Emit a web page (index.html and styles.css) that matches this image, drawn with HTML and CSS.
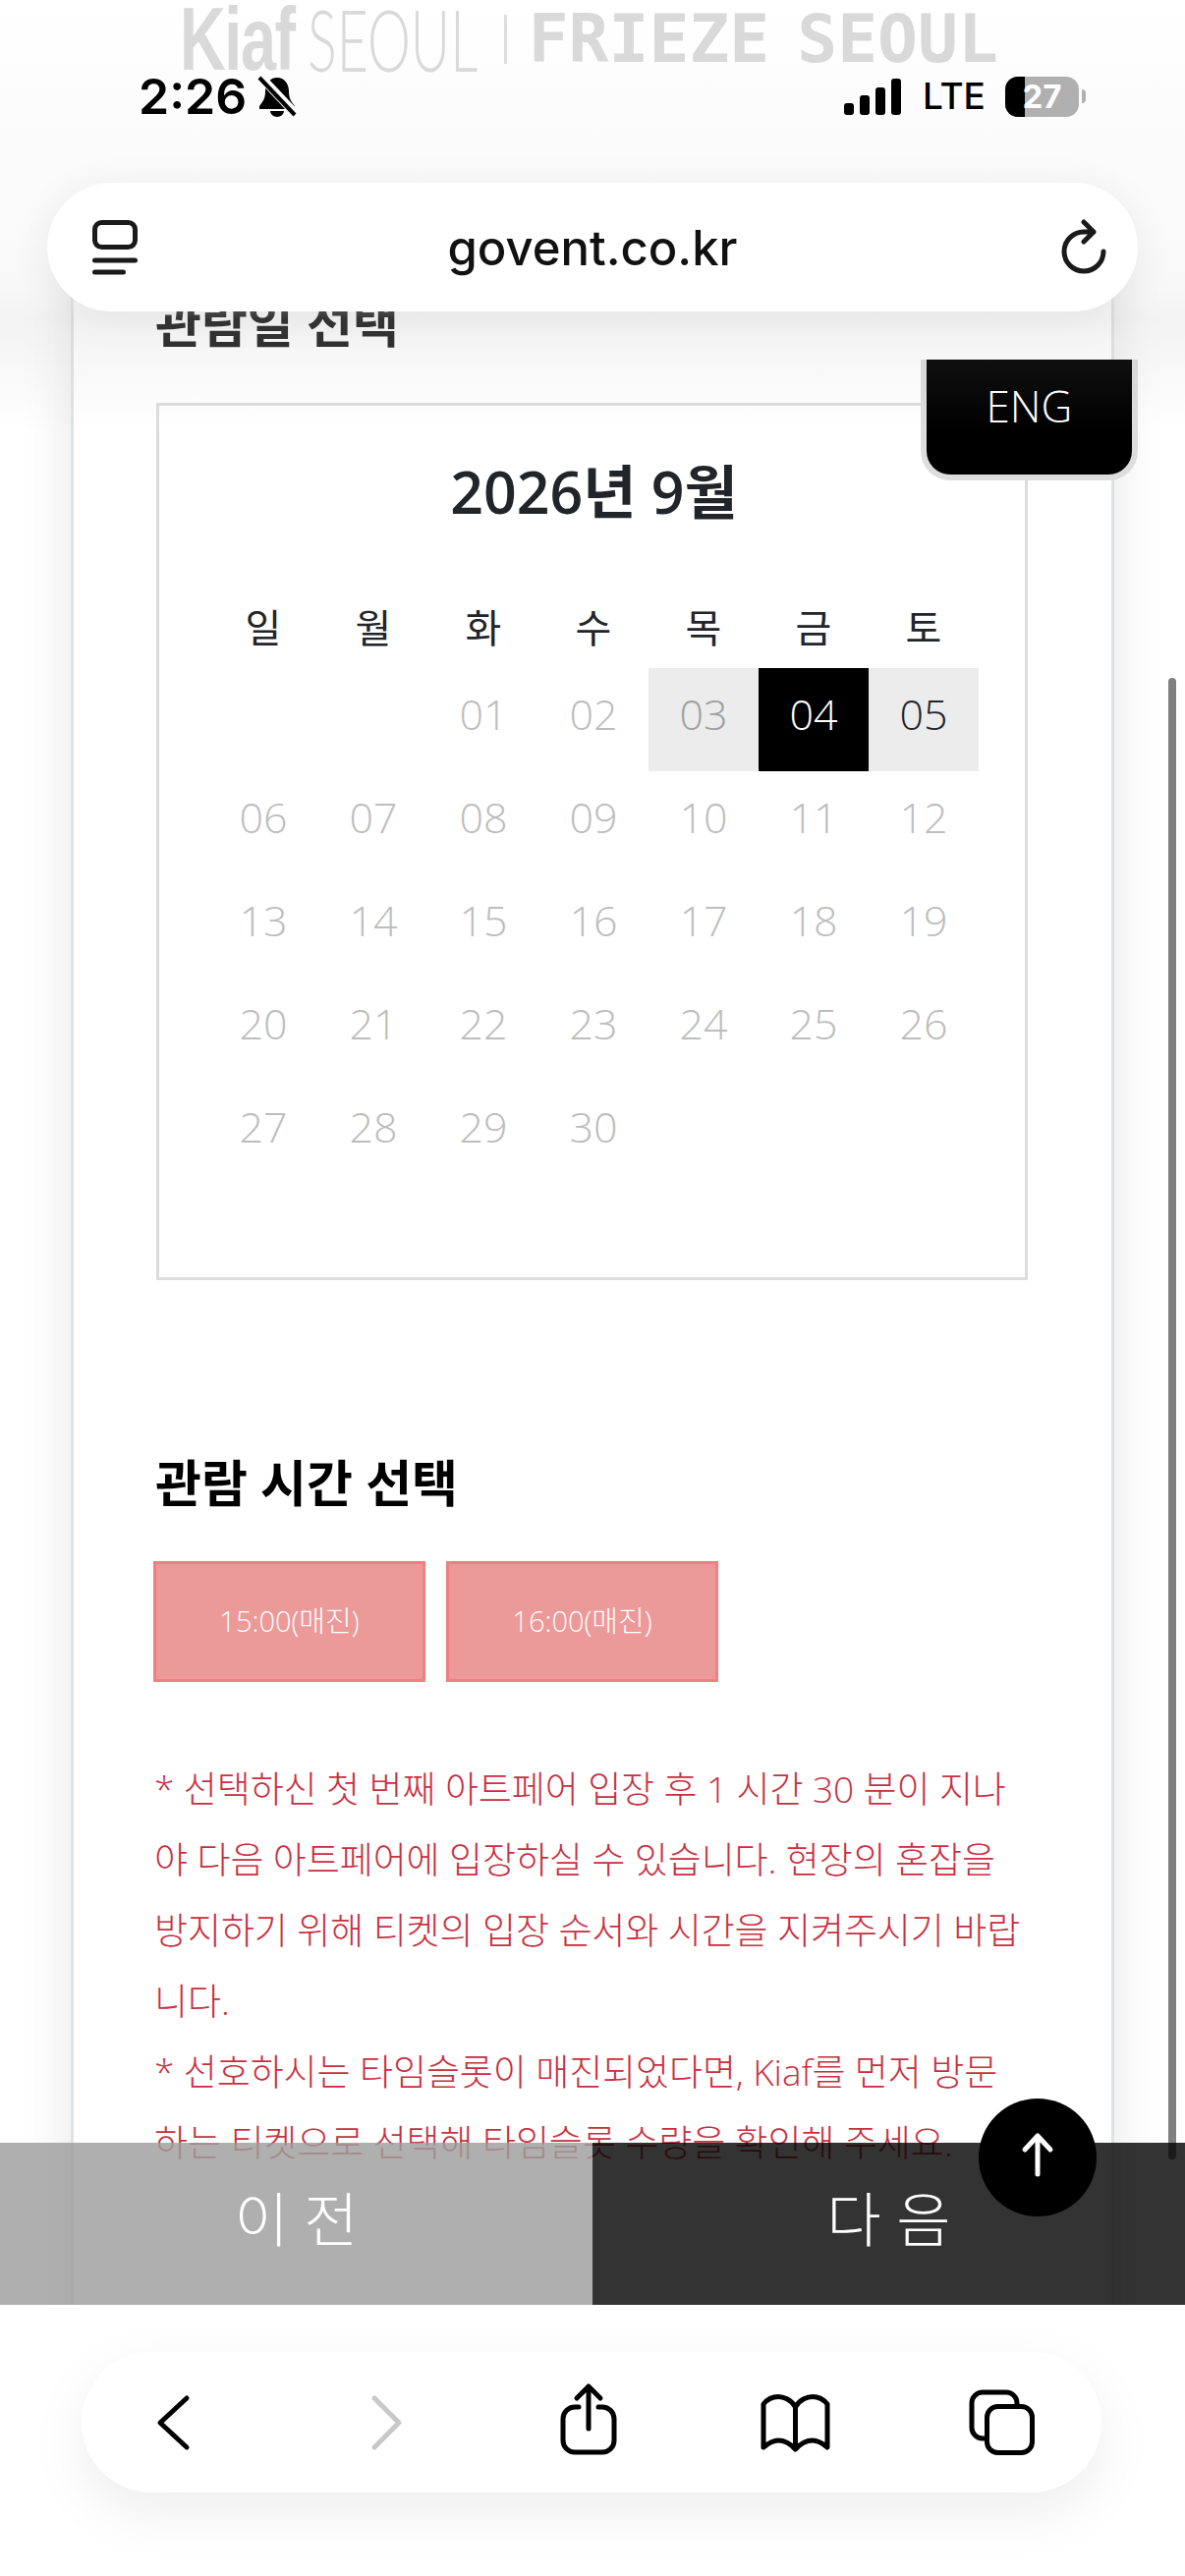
FILE: index.html
```html
<!DOCTYPE html>
<html lang="ko">
<head>
<meta charset="utf-8">
<title>govent.co.kr</title>
<link rel="stylesheet" href="styles.css">
</head>
<body>
<div class="screen">
  <main class="card">
    <h2 class="heading heading-first">관람일 선택</h2>
    <section class="calendar">
      <h3 class="cal-title">2026년 9월</h3>
      <div class="cal-grid">
        <div class="wd">일</div><div class="wd">월</div><div class="wd">화</div><div class="wd">수</div><div class="wd">목</div><div class="wd">금</div><div class="wd">토</div>
        <div class="day"></div><div class="day"></div><div class="day">01</div><div class="day">02</div><div class="day avail">03</div><div class="day sel">04</div><div class="day avail dark">05</div>
        <div class="day">06</div><div class="day">07</div><div class="day">08</div><div class="day">09</div><div class="day">10</div><div class="day">11</div><div class="day">12</div>
        <div class="day">13</div><div class="day">14</div><div class="day">15</div><div class="day">16</div><div class="day">17</div><div class="day">18</div><div class="day">19</div>
        <div class="day">20</div><div class="day">21</div><div class="day">22</div><div class="day">23</div><div class="day">24</div><div class="day">25</div><div class="day">26</div>
        <div class="day">27</div><div class="day">28</div><div class="day">29</div><div class="day">30</div>
      </div>
    </section>
    <h2 class="heading heading-second">관람 시간 선택</h2>
    <div class="slots">
      <div class="slot">15:00(매진)</div>
      <div class="slot">16:00(매진)</div>
    </div>
    <p class="notice">* 선택하신 첫 번째 아트페어 입장 후 1 시간 30 분이 지나<br>야 다음 아트페어에 입장하실 수 있습니다. 현장의 혼잡을<br>방지하기 위해 티켓의 입장 순서와 시간을 지켜주시기 바랍<br>니다.<br>* 선호하시는 타임슬롯이 매진되었다면, Kiaf를 먼저 방문<br>하는 티켓으로 선택해 타임슬롯 수량을 확인해 주세요.</p>
  </main>

  <div class="eng">ENG</div>

  <div class="scrollbar"></div>

  <div class="actions">
    <div class="action action-prev">이 전</div>
    <div class="action action-next">다 음</div>
  </div>

  <div class="to-top">
    <svg class="icon" width="60" height="60" viewBox="0 0 60 60"><path class="st-white" d="M30 47V9M17 22 30 8l13 14"/></svg>
  </div>

  <header class="chrome">
    <div class="logo">
      <span class="logo-kiaf">Kiaf</span>
      <span class="logo-seoul">SEOUL</span>
      <span class="logo-bar"></span>
      <span class="logo-frieze">FRIEZE SEOUL</span>
    </div>
    <div class="status">
      <span class="time">2:26</span>
      <svg class="icon bell" width="40" height="42" viewBox="0 0 40 42">
        <path class="fill-black" d="M20 2c-7 0-12 6-12 14 0 8-3 11-6 15v3h36v-3c-3-4-6-7-6-15C32 8 27 2 20 2Z"/>
        <path class="fill-black" d="M13 36a7 6 0 0 0 14 0Z"/>
        <path class="st-gap" d="M4 2l35 37"/>
        <path class="st-slash" d="M2 2l36 38"/>
      </svg>
      <svg class="icon signal" width="58" height="37" viewBox="0 0 58 37">
        <rect class="fill-black" x="0" y="25" width="10" height="12" rx="3"/>
        <rect class="fill-black" x="16" y="17" width="10" height="20" rx="3"/>
        <rect class="fill-black" x="32" y="9" width="10" height="28" rx="3"/>
        <rect class="fill-black" x="48" y="0" width="10" height="37" rx="3"/>
      </svg>
      <span class="lte">LTE</span>
      <div class="battery">
        <span class="battery-fill"></span>
        <span class="battery-num">27</span>
      </div>
      <span class="battery-tip"></span>
    </div>
    <div class="urlbar">
      <svg class="icon" width="46" height="56" viewBox="0 0 46 56">
        <rect class="st-dark" x="2.500" y="2.500" width="41" height="25" rx="7"/>
        <path class="st-dark" d="M2.500 41h41M2.500 53h29"/>
      </svg>
      <span class="url">govent.co.kr</span>
      <svg class="icon" width="46" height="56" viewBox="0 0 46 56">
        <path class="st-dark" d="M43 32a20 20 0 1 1-20-20h10M23 2l10 10-10 10"/>
      </svg>
    </div>
  </header>

  <footer class="browserbar">
    <nav class="toolbar">
      <div class="tool"><svg class="icon" width="100" height="80" viewBox="0 0 100 80"><path class="st-black" d="M64 15 37 40l27 25"/></svg></div>
      <div class="tool"><svg class="icon" width="100" height="80" viewBox="0 0 100 80"><path class="st-off" d="m44 15 25 25-25 25"/></svg></div>
      <div class="tool"><svg class="icon" width="100" height="80" viewBox="0 0 100 80"><path class="st-black" d="M51 46V3M39 15 51 3l12 12M41 24h-4a12 12 0 0 0-12 12v22a12 12 0 0 0 12 12h28a12 12 0 0 0 12-12V36a12 12 0 0 0-12-12h-4"/></svg></div>
      <div class="tool"><svg class="icon" width="100" height="80" viewBox="0 0 100 80"><path class="st-black" d="M50.500 24C46 16 38 13.500 33 13.500 27 13.500 22 16 18 21v44c6-5 10-7 15-7 7 0 13 4 17.500 9 4.500-5 10.500-9 17.500-9 5 0 9 2 15 7V21c-4-5-9-7.500-15-7.500-5 0-13 2.500-17.500 10.500ZM50.500 24v43"/></svg></div>
      <div class="tool"><svg class="icon" width="100" height="80" viewBox="0 0 100 80"><path class="st-black" d="M65 21v-1a11 11 0 0 0-11-11H30a11 11 0 0 0-11 11v25a11 11 0 0 0 11 11h2"/><rect class="st-black" x="34.500" y="23.500" width="46" height="47" rx="11"/></svg></div>
    </nav>
  </footer>
</div>
</body>
</html>
```

FILE: styles.css
```css
* { box-sizing: border-box; }
html, body { margin: 0; padding: 0; background: #fff; }
body { font-family: "Open Sans", "Noto Sans CJK KR", sans-serif; }

.screen { position: relative; width: 1206px; height: 2622px; overflow: hidden; background: #fff; }

.icon { display: block; flex: none; overflow: visible; }
.fill-black { fill: #000; }
.st-black, .st-dark, .st-off, .st-white { fill: none; stroke-width: 5; stroke-linecap: round; stroke-linejoin: round; }
.st-black { stroke: #000; }
.st-dark { stroke: #1a1a1a; }
.st-off { stroke: #c8c8c8; }
.st-white { stroke: #fff; }
.st-gap { fill: none; stroke: #fbfbfb; stroke-width: 9; }
.st-slash { fill: none; stroke: #000; stroke-width: 4; }

/* page content */
.card {
  margin-left: 72px;
  width: 1062px;
  height: 2622px;
  padding: 294px 85px 0;
  background: #fff;
  border-left: 3px solid #e0e3e6;
  border-right: 3px solid #e0e3e6;
  box-shadow: 0 0 50px rgba(0, 0, 0, .1);
}
.heading { margin: 0 0 0 -2px; height: 70px; font-size: 51px; line-height: 70px; font-weight: 700; color: #000; }
.heading-first { color: #222; }
.heading-second { margin-top: 171px; }

.calendar {
  margin: 46px 0 0 -1px;
  width: 887px;
  height: 893px;
  padding: 47px 46px 0 50px;
  border: 3px solid #ddd;
}
.cal-title { margin: 0 0 62px; height: 80px; font-size: 59px; line-height: 80px; font-weight: 600; text-align: center; color: #212529; }
.cal-grid { display: grid; grid-template-columns: repeat(7, 112px); grid-template-rows: 78px repeat(5, 105px); }
.wd { height: 70px; display: flex; align-items: center; justify-content: center; font-size: 40px; color: #212529; }
.day { display: flex; align-items: center; justify-content: center; padding-bottom: 12px; font-size: 43px; font-weight: 300; color: #bdbdbd; }
.avail { background: #ececec; color: #a0a0a0; }
.dark { color: #212529; }
.sel { background: #000; color: #fff; }

.slots { display: flex; gap: 21px; margin: 45px 0 0 -4px; }
.slot {
  width: 277px;
  height: 123px;
  display: flex;
  align-items: center;
  justify-content: center;
  padding-bottom: 5px;
  font-size: 29px;
  font-weight: 300;
  color: #fff;
  background: #ec9999;
  border: 3px solid #f08080;
}
.notice { margin: 73px 0 0 -3px; font-size: 37px; line-height: 72px; letter-spacing: -.1px; font-weight: 300; color: #c8303f; white-space: nowrap; }

/* floating controls */
.eng {
  position: absolute;
  top: 366px;
  left: 937px;
  width: 221px;
  height: 123px;
  padding-top: 16px;
  text-align: center;
  font-size: 44px;
  line-height: 62px;
  font-weight: 300;
  color: #fff;
  background: #000;
  border: 6px solid #ddd;
  border-top: 0;
  border-radius: 0 0 30px 30px;
}
.scrollbar { position: absolute; top: 690px; left: 1189px; width: 8px; height: 1508px; border-radius: 4px; background: rgba(0, 0, 0, .5); }
.actions { position: absolute; top: 2181px; left: 0; width: 1206px; height: 165px; display: flex; }
.action { width: 603px; display: flex; align-items: center; justify-content: center; padding-bottom: 16px; font-size: 60px; font-weight: 300; color: #fff; }
.action-prev { background: rgba(157, 157, 157, .82); }
.action-next { background: rgba(4, 4, 4, .81); }
.to-top { position: absolute; top: 2136px; left: 996px; width: 120px; height: 120px; display: flex; align-items: center; justify-content: center; border-radius: 50%; background: #000; }

/* browser chrome */
.chrome {
  position: absolute;
  top: 0;
  left: 0;
  width: 1206px;
  height: 440px;
  background: linear-gradient(to bottom, #fff 0, #fbfbfb 150px, rgba(250, 250, 250, .96) 245px, rgba(240, 240, 240, .5) 295px, rgba(170, 170, 170, .14) 325px, rgba(170, 170, 170, 0) 440px);
}
.logo { display: flex; align-items: flex-start; height: 77px; padding-left: 183px; color: #d9d9d9; white-space: nowrap; }
.logo-kiaf { margin-right: -32px; font: 700 90px/80px "Liberation Sans", sans-serif; letter-spacing: -2px; transform: scaleX(.72); transform-origin: left top; }
.logo-seoul { margin-right: -69px; font: 300 86px/80px "Lato", sans-serif; transform: scaleX(.645); transform-origin: left top; }
.logo-bar { flex: none; width: 3px; height: 50px; margin: 15px 22px 0 0; background: #ddd; }
.logo-frieze { font: 700 68px/80px "DejaVu Sans Mono", monospace; word-spacing: -13px; }

.status { display: flex; align-items: center; height: 42px; padding-left: 141px; }
.time { width: 121px; font: 600 50px/42px "Inter", sans-serif; color: #000; }
.signal { margin-left: 557px; }
.lte { width: 84px; margin-left: 22px; font: 500 37px/42px "Inter", sans-serif; color: #000; }
.battery { position: relative; display: flex; align-items: center; justify-content: center; width: 75px; height: 41px; overflow: hidden; border-radius: 13px; background: #b0b0b0; }
.battery-fill { position: absolute; top: 0; left: 0; width: 20px; height: 41px; background: #000; }
.battery-num { position: relative; font: 700 33px/41px "Inter", sans-serif; color: #fff; }
.battery-tip { width: 4px; height: 14px; margin-left: 3px; border-radius: 0 4px 4px 0; background: #b0b0b0; }

.urlbar {
  display: flex;
  align-items: center;
  justify-content: space-between;
  width: 1110px;
  height: 131px;
  margin: 67px 0 0 48px;
  padding: 0 32px 0 46px;
  border-radius: 66px;
  background: #fff;
  box-shadow: 0 6px 40px rgba(0, 0, 0, .07);
}
.url { margin: 2px 14px 0 0; font: 500 49px/60px "Inter", sans-serif; color: #111; }

.browserbar { position: absolute; top: 2346px; left: 0; width: 1206px; height: 276px; padding: 48px 85px 0 83px; background: #fff; }
.toolbar {
  display: flex;
  gap: 111px;
  align-items: center;
  width: 1038px;
  height: 143px;
  padding-left: 43px;
  border-radius: 72px;
  background: #fff;
  box-shadow: 0 20px 60px rgba(0, 0, 0, .07);
}
.tool { width: 100px; height: 80px; flex: none; }
```
